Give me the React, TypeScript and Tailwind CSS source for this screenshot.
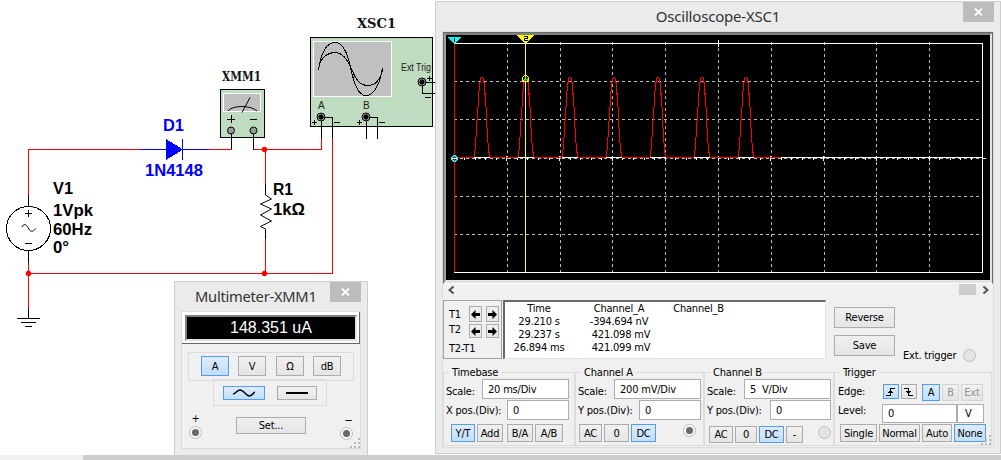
import type { ReactNode } from "react";
import clsx from "clsx";

const UI = "font-['DejaVu_Sans_Condensed','DejaVu_Sans',sans-serif] [font-stretch:condensed] text-[11px] leading-[13px] tracking-[-0.2px] text-black";

function Btn({ on, off, className, children }: { on?: boolean; off?: boolean; className?: string; children?: ReactNode }) {
  return (
    <button
      className={clsx(
        "flex shrink-0 items-center justify-center whitespace-nowrap border",
        on ? "border-[#569de5] bg-gradient-to-b from-[#dcecfc] to-[#c0dffc]" : "bg-gradient-to-b from-[#f0f0f0] to-[#e5e5e5]",
        !on && (off ? "border-[#d4d4d4] text-[#939393]" : "border-[#acacac]"),
        className
      )}
    >
      {children}
    </button>
  );
}

function Field({ className, children }: { className?: string; children: ReactNode }) {
  return <div className={clsx("flex shrink-0 items-center whitespace-pre border border-[#abadb3] bg-white", className)}>{children}</div>;
}

function Radio({ on, className }: { on?: boolean; className?: string }) {
  return (
    <span className={clsx("flex size-[13px] shrink-0 items-center justify-center rounded-full border border-[#bcbcbc]", on ? "bg-[#f6f6f6]" : "bg-[#e4e4e4]", className)}>
      {on && <span className="size-[7px] rounded-full bg-[#686868]" />}
    </span>
  );
}

function Close({ className }: { className?: string }) {
  return (
    <button className={clsx("flex h-[20px] w-[31px] items-center justify-center bg-[#bcbcbc]", className)}>
      <svg width="9" height="8" viewBox="0 0 9 8" stroke="#fff" strokeWidth="1.800">
        <path d="M1 .5 8 7.5M8 .5 1 7.5" />
      </svg>
    </button>
  );
}

function Grip({ className }: { className?: string }) {
  return (
    <svg className={className} width="10" height="10" fill="#b8b8b8" shapeRendering="crispEdges">
      <path d="M8 0h2v2h-2zM4 4h2v2h-2zM8 4h2v2h-2zM0 8h2v2h-2zM4 8h2v2h-2zM8 8h2v2h-2z" />
    </svg>
  );
}

function Group({ title, className, children }: { title: string; className?: string; children: ReactNode }) {
  return (
    <div className={clsx("relative h-[74px] shrink-0 border border-[#dcdcdc] bg-[#f0f0f0]", className)}>
      <span className="absolute left-[5px] top-[-7px] bg-[#f0f0f0] px-[3px]">{title}</span>
      {children}
    </div>
  );
}

function Jack({ x, y }: { x: number; y: number }) {
  return (
    <g>
      <circle cx={x} cy={y} r="4" fill="#aaa" stroke="#000" />
      <circle cx={x} cy={y} r="2.200" fill="#000" />
    </g>
  );
}

function Schematic() {
  return (
    <svg className="absolute left-0 top-0" width="436" height="340" fill="none" stroke="#000" shapeRendering="crispEdges">
      <g stroke="#f00">
        <path d="M28.500 195V149.500H141M209 149.500H231.500M253.500 149.500H321.500V138M332.500 138V273.500H28.500M28.500 263V308M265.500 149V184M265.500 239V273" />
      </g>
      <path d="M28.500 195V207M28.500 250V263M28.500 308V318M17 318.500H40M21 322.500H36M25 326.500H32" />
      <circle cx="28.500" cy="228.500" r="22" />
      <path d="M25 213.500H32M28.500 210V217M25 243.500H32" />
      <path shapeRendering="auto" d="M22 227C23.500 223.500 26 224 28 227.500C30 232 33 232.500 35.500 228.500" />
      <path stroke="#00f" d="M141 149.500H209M182.500 139V160" />
      <path fill="#00f" stroke="none" d="M166 139V160L183 149.500Z" />
      <path shapeRendering="auto" d="M265.500 184V195L271.500 199L260.500 204L271.500 209L260.500 215L271.500 221L260.500 226.500L265.500 229V239" />

      <rect x="220.500" y="89.500" width="44" height="48" fill="#c0dcc0" />
      <rect x="223.500" y="93.500" width="37" height="18" fill="#c0c0c0" stroke="#fff" />
      <path shapeRendering="auto" d="M228 111C232 105 251 105 257 111M242 112.500L250 97.500" />
      <path d="M227 119.500H235M231.500 115V123M250 119.500H257M231.500 133V149M253.500 133V150" />
      <circle cx="231" cy="130.500" r="3.500" fill="#999" shapeRendering="auto" />
      <circle cx="253.500" cy="130.500" r="3.500" fill="#999" shapeRendering="auto" />

      <rect x="310.500" y="37.500" width="122" height="89" fill="#c0dcc0" />
      <rect x="313.500" y="41.500" width="78" height="55" fill="#c0c0c0" stroke="#fff" />
      <path d="M318.500 70C321 53 326 42.500 335 42.500C343 42.500 347 52 350 65C354 84 358 95.500 366 95.500C374 95.500 380 84 382.500 68" />
      <path d="M319 65C323 55 329 52.500 335 52.500C343 52.500 348 60 352 70C356 80 360 85.500 368 85.500C375 85.500 380 80 382.500 70" />
      <path d="M321.500 117V138M324 117.500H332.500V138M366.500 117V139M369 117.500H377.500V139M422.500 82V93.500H435M422 82.500H435M334 122.500H340M379 122.500H385M425 97.500H431M312 122.500H317M314.500 120V125M357 122.500H362M359.500 120V125M427 78.500H432M429.500 76V81" />
      <g shapeRendering="auto">
        <Jack x={321} y={117} />
        <Jack x={366} y={117} />
        <Jack x={422} y={82} />
      </g>
      <g fill="#f00" stroke="none" shapeRendering="auto">
        <circle cx="28.500" cy="273.500" r="2.700" />
        <circle cx="264.500" cy="149.500" r="2.700" />
        <circle cx="264.500" cy="273.500" r="2.700" />
      </g>
      <g stroke="none" fill="#000" fontFamily="Liberation Sans, sans-serif" fontSize="16" fontWeight="bold">
        <text x="53" y="194" textLength="20" lengthAdjust="spacingAndGlyphs">V1</text>
        <text x="53" y="216" textLength="40" lengthAdjust="spacingAndGlyphs">1Vpk</text>
        <text x="53" y="235" textLength="39" lengthAdjust="spacingAndGlyphs">60Hz</text>
        <text x="53" y="253" textLength="16" lengthAdjust="spacingAndGlyphs">0°</text>
        <text x="273" y="195" textLength="20" lengthAdjust="spacingAndGlyphs">R1</text>
        <text x="273" y="215" textLength="32" lengthAdjust="spacingAndGlyphs">1kΩ</text>
        <text x="163" y="131" textLength="21" lengthAdjust="spacingAndGlyphs" fill="#00f">D1</text>
        <text x="145" y="176" textLength="58" lengthAdjust="spacingAndGlyphs" fill="#00f">1N4148</text>
      </g>
      <g stroke="none" fill="#111" fontFamily="DejaVu Serif, serif" fontSize="13" fontWeight="bold">
        <text x="357" y="28" textLength="39" lengthAdjust="spacingAndGlyphs">XSC1</text>
        <text x="222" y="81" textLength="39" lengthAdjust="spacingAndGlyphs">XMM1</text>
      </g>
      <g stroke="none" fill="#222" fontFamily="Liberation Sans, sans-serif" fontSize="10">
        <text x="401" y="71" textLength="30" lengthAdjust="spacingAndGlyphs">Ext Trig</text>
        <text x="318" y="109">A</text>
        <text x="363" y="109">B</text>
      </g>
    </svg>
  );
}

const pulseStarts = [474, 518, 562, 606, 650, 694, 738];
const gridX = [507.5, 560.5, 612.5, 665.5, 718.5, 771.5, 824.5, 876.5, 929.5];
const gridY = [81.5, 119.5, 158.5, 196.5, 234.5];
const ticks = Array.from({ length: 50 }, (_, i) => Math.floor(454 + i * 10.56) + 0.5);

function Screen() {
  return (
    <svg className="block" width="544" height="245" viewBox="446 35 544 245" fill="none" shapeRendering="crispEdges">
      <rect x="446" y="35" width="544" height="245" fill="#000" />
      <g stroke="#b8b8b8" strokeDasharray="3 3">
        {gridX.map((x) => (
          <path key={x} d={`M${x} 42V272`} />
        ))}
        {gridY.map((y) => (
          <path key={y} d={`M454 ${y}H982`} />
        ))}
      </g>
      <path stroke="#fff" d="M454 43.500H982.500V272.500H454M718.500 40V47M982 158.500H986" />
      <g stroke="#fff">
        {ticks.map((x, i) => (
          <path key={i} d={i % 5 === 0 ? `M${x} 156V161` : `M${x} 158V160`} />
        ))}
        <path d="M781 157.500H983" />
      </g>
      <path stroke="#f00" d="M454.500 43V272M454 157.500H781" />
      {pulseStarts.map((x) => (
        <g key={x}>
          <path stroke="#fff" d={`M${x} 157.500H${x + 16}`} />
          <path
            stroke="#f00"
            d={`M${x + 0.5} 157V150M${x + 1.5} 150V137M${x + 2.5} 137V121M${x + 3.5} 121V107M${x + 4.5} 107V91M${x + 5.5} 91V82M${x + 6.5} 83V78M${x + 7} 77.500H${x + 9}M${x + 9.5} 78V83M${x + 10.5} 82V95M${x + 11.5} 93V107M${x + 12.5} 107V128M${x + 13.5} 128V143M${x + 14.5} 143V153M${x + 15.5} 152V157`}
          />
        </g>
      ))}
      <path stroke="#ff0" d="M525.500 43V272" />
      <circle cx="525.500" cy="78.500" r="3" stroke="#ff0" />
      <path stroke="#0f0" d="M524 79.500H528M525.500 77V81" />
      <circle cx="454.500" cy="158.500" r="2.700" stroke="#0ff" />
      <path stroke="#fff" d="M452 158.500H457" />
      <path fill="#0ff" d="M448 37H461L454.500 44Z" />
      <path stroke="#000" d="M454.500 38V42" />
      <path fill="#ff0" d="M517 35H534L525.500 44Z" />
      <path stroke="#000" d="M523.500 36.500H527V38.500H524.500V40.500H528" />
    </svg>
  );
}

function Arrow({ right }: { right?: boolean }) {
  return (
    <svg width="9" height="9" fill="#000" className={right ? "rotate-180" : ""}>
      <path d="M0 4.500 4.500 0V3H9V6H4.500V9Z" />
    </svg>
  );
}

function Channel({ title, value, className, scaleW, posW, children }: { title: string; value: string; className: string; scaleW: string; posW: string; children: ReactNode }) {
  return (
    <Group title={title} className={className}>
      <div className="flex h-[26px] items-end justify-between pr-[3px] pl-[2px]">
        <span className="mb-px">Scale:</span>
        <Field className={clsx("h-[20px] pl-[5px]", scaleW)}>{value}</Field>
      </div>
      <div className="mt-px flex h-[20px] items-center justify-between whitespace-nowrap pr-[3px] pl-[2px]">
        <span className="pt-px">{title === "Timebase" ? "X" : "Y"} pos.(Div):</span>
        <Field className={clsx("h-[20px] pl-[5px]", posW)}>0</Field>
      </div>
      {children}
    </Group>
  );
}

function Oscilloscope() {
  return (
    <section className="absolute left-[435px] top-px h-[453px] w-[566px] border border-[#cdcdcd] bg-[#ebebeb]">
      <header className="relative flex h-[29px] items-center justify-center">
        <h1 className="whitespace-nowrap font-['Noto_Sans','Open_Sans',sans-serif] text-[15px] tracking-[-0.2px] text-[#333]">Oscilloscope-XSC1</h1>
        <Close className="absolute right-[6px] top-0" />
      </header>
      <div className="ml-[6px] h-[417px] w-[552px] border border-[#dcdcdc] bg-[#f0f0f0]">
        <div className="h-[252px] w-[550px] border border-b-white border-l-[#696969] border-r-[#696969] border-t-[#696969] bg-white">
          <div className="h-[250px] w-[548px] border-b border-[#696969]">
            <div className="box-content h-[245px] w-[544px] border-b-[3px] border-l-2 border-r-2 border-t-2 border-b-[#e3e3e3] border-l-[#a0a0a0] border-r-[#e3e3e3] border-t-[#808080]">
              <Screen />
            </div>
          </div>
        </div>
        <div className="flex h-[15px] items-start justify-between pl-[5px] pr-[4px]">
          <svg className="mt-[2px]" width="6" height="8" fill="none" stroke="#555" strokeWidth="2"><path d="M5.500 0.500 1.500 4 5.500 7.500" /></svg>
          <div className="flex gap-[7px]">
            <span className="h-[11px] w-[17px] bg-[#cdcdcd]" />
            <svg className="mt-[2px]" width="6" height="8" fill="none" stroke="#555" strokeWidth="2"><path d="M.5.500 4.500 4 .5 7.500" /></svg>
          </div>
        </div>
        <div className={clsx("flex h-[73px]", UI)}>
          <div className="mt-[1px] flex h-[59px] w-[59px] flex-col border border-[#a0a0a0] pl-[5px]">
            <div className="mt-[5px] flex h-[16px]"><span className="mt-[2px] w-[20px]">T1</span><Btn className="h-[16px] w-[13px]"><Arrow /></Btn><Btn className="ml-[4px] h-[16px] w-[13px]"><Arrow right /></Btn></div>
            <div className="mt-[2px] flex h-[14px]"><span className="-mt-px w-[20px]">T2</span><Btn className="h-[14px] w-[13px]"><Arrow /></Btn><Btn className="ml-[4px] h-[14px] w-[13px]"><Arrow right /></Btn></div>
            <span className="mt-[4px]">T2-T1</span>
          </div>
          <div className="ml-[1px] mt-[1px] grid h-[59px] w-[323px] grid-cols-[68px_92px_67px] grid-rows-[13px_13px_13px_13px] content-start justify-items-center whitespace-nowrap border-2 border-b border-r border-b-[#e3e3e3] border-l-[#696969] border-r-[#e3e3e3] border-t-[#696969] bg-white">
            <span>Time</span><span>Channel_A</span><span>Channel_B</span>
            <span>29.210 s</span><span>-394.694 nV</span><span />
            <span>29.237 s</span><span className="pl-1">421.098 mV</span><span />
            <span>26.894 ms</span><span className="pl-1">421.099 mV</span>
          </div>
          <div className="ml-[8px] mt-[8px] flex flex-col gap-[7px]">
            <Btn className="h-[21px] w-[61px]">Reverse</Btn>
            <Btn className="h-[21px] w-[61px]">Save</Btn>
          </div>
          <div className="mt-[50px] flex h-[13px] items-center whitespace-nowrap pl-[8px]">
            <span className="w-[60px]">Ext. trigger</span>
            <Radio />
          </div>
        </div>
        <div className={clsx("flex", UI)}>
          <Channel title="Timebase" value="20 ms/Div" className="w-[132px]" scaleW="w-[87px] mr-[2px]" posW="w-[62px] mr-[2px]">
            <div className="mt-[4px] flex pl-[7px]">
              <Btn on className="h-[18px] w-[24px]">Y/T</Btn>
              <Btn className="ml-[2px] h-[18px] w-[26px]">Add</Btn>
              <Btn className="ml-[4px] h-[18px] w-[26px]">B/A</Btn>
              <Btn className="ml-[2px] h-[18px] w-[28px]">A/B</Btn>
            </div>
          </Channel>
          <Channel title="Channel A" value="200 mV/Div" className="w-[129px]" scaleW="w-[87px] -mr-px" posW="w-[62px] -mr-px">
            <div className="mt-[4px] flex pl-[3px]">
              <Btn className="h-[18px] w-[23px]">AC</Btn>
              <Btn className="ml-[2px] h-[18px] w-[25px]">0</Btn>
              <Btn on className="ml-[2px] h-[18px] w-[25px]">DC</Btn>
              <Radio on className="ml-[27px]" />
            </div>
          </Channel>
          <Channel title="Channel B" value="5  V/Div" className="w-[130px]" scaleW="w-[87px] -mr-px" posW="w-[61px] -mr-px">
            <div className="mt-[6px] flex pl-[4px]">
              <Btn className="h-[17px] w-[24px]">AC</Btn>
              <Btn className="ml-[2px] h-[17px] w-[22px]">0</Btn>
              <Btn on className="ml-[2px] h-[17px] w-[25px]">DC</Btn>
              <Btn className="ml-[2px] h-[17px] w-[17px]">-</Btn>
              <Radio className="ml-[15px]" />
            </div>
          </Channel>
          <Group title="Trigger" className="w-[158px]">
            <div className="flex h-[28px] items-start pl-[3px] pt-[11px]">
              <span className="w-[45px] pt-[1px]">Edge:</span>
              <Btn on className="h-[15px] w-[16px]"><svg width="10" height="10" fill="none" stroke="#000" shapeRendering="crispEdges"><path d="M0 8.500H4.500V1.500H9M2 5.500H7M3 4.500H6" /></svg></Btn>
              <Btn className="ml-[2px] h-[15px] w-[16px]"><svg width="10" height="10" fill="none" stroke="#000" shapeRendering="crispEdges"><path d="M0 1.500H4.500V8.500H9M2 4.500H7M3 5.500H6" /></svg></Btn>
              <Btn on className="ml-[5px] h-[17px] w-[18px]">A</Btn>
              <Btn off className="ml-[2px] h-[17px] w-[17px]">B</Btn>
              <Btn off className="ml-[2px] h-[17px] w-[22px]">Ext</Btn>
            </div>
            <div className="mt-[3px] flex h-[19px] pl-[3px]">
              <span className="w-[44px]">Level:</span>
              <Field className="h-[19px] w-[75px] pl-[5px]">0</Field>
              <Field className="h-[19px] w-[27px] pl-[7px]">V</Field>
            </div>
            <div className="mt-px flex gap-[2px] pl-[5px]">
              <Btn className="h-[18px] w-[37px]">Single</Btn>
              <Btn className="h-[18px] w-[41px]">Normal</Btn>
              <Btn className="h-[18px] w-[30px]">Auto</Btn>
              <Btn on className="h-[18px] w-[32px]">None</Btn>
            </div>
            <Grip className="absolute bottom-0 right-0" />
          </Group>
        </div>
      </div>
    </section>
  );
}

function Multimeter() {
  return (
    <section className={clsx("absolute left-[174px] top-[281px] h-[179px] w-[194px] border border-[#cdcdcd] bg-[#ebebeb]", UI)}>
      <header className="flex h-[29px] items-start justify-between pl-[20px] pr-[6px]">
        <h1 className="whitespace-nowrap pt-[4px] font-['Noto_Sans','Open_Sans',sans-serif] text-[14.700px] leading-[20px] tracking-[-0.25px] text-[#333]">Multimeter-XMM1</h1>
        <Close />
      </header>
      <div className="relative ml-[6px] h-[138px] w-[180px] border border-[#dcdcdc] bg-[#f0f0f0]">
        <div className="h-[32px] w-[178px] border-b border-r border-[#696969] bg-white pl-[3px] pt-[3px]">
          <div className="flex h-[26px] w-[172px] items-center justify-center border-2 border-b-[#e3e3e3] border-l-[#808080] border-r-[#e3e3e3] border-t-[#808080] bg-black pb-px font-['Liberation_Sans',sans-serif] text-[16px] tracking-normal text-white">148.351 uA</div>
        </div>
        <div className="ml-[6px] mt-[8px] flex h-[29px] w-[166px] gap-[9px] border border-[#dcdcdc] pl-[12px] pt-[3px]">
          <Btn on className="h-[20px] w-[28px]">A</Btn>
          <Btn className="h-[20px] w-[28px]">V</Btn>
          <Btn className="ml-px h-[20px] w-[28px]">Ω</Btn>
          <Btn className="h-[20px] w-[28px]">dB</Btn>
        </div>
        <div className="-mt-[2px] ml-[31px] flex h-[27px] w-[114px] gap-[12px] border border-[#dcdcdc] pl-[9px] pt-[6px]">
          <Btn on className="h-[14px] w-[42px]"><svg width="22" height="8" fill="none" stroke="#000" strokeWidth="1.500"><path d="M0 5C3 4.500 4 1 7 1C11 1 13 7 16 7C19 7 20 4 22 3" /></svg></Btn>
          <Btn className="h-[14px] w-[40px]"><span className="-mt-px h-[2px] w-[22px] bg-black" /></Btn>
        </div>
        <div className="mt-[6px] flex justify-between pl-[7px] pr-[7px]">
          <div className="flex w-[13px] flex-col items-center"><span className="h-[14px]">+</span><Radio on /></div>
          <Btn className="mt-[5px] h-[17px] w-[70px]">Set...</Btn>
          <div className="flex w-[13px] flex-col items-center pt-[2px]"><span className="h-[13px] pl-1">−</span><Radio on /></div>
        </div>
        <Grip className="absolute bottom-0 right-0" />
      </div>
    </section>
  );
}

export default function App() {
  return (
    <main className="relative h-[460px] w-[1001px] overflow-hidden bg-white">
      <Schematic />
      <Multimeter />
      <Oscilloscope />
      <div className="absolute bottom-0 left-0 flex h-[5px] w-full">
        <span className="w-[83px] bg-[#f0f0f0]" />
        <span className="flex-1 bg-[#cdcdcd]" />
      </div>
    </main>
  );
}
